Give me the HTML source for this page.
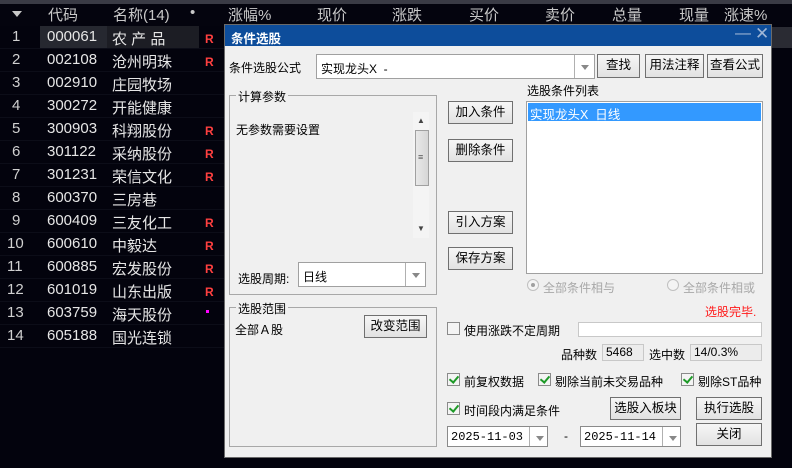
<!DOCTYPE html>
<html><head><meta charset="utf-8"><style>
*{margin:0;padding:0;box-sizing:border-box}
body{width:792px;height:468px;overflow:hidden;background:#03030d;font-family:"Liberation Sans","Noto Sans CJK SC",sans-serif;position:relative}
.a{position:absolute;white-space:nowrap}
.hd{color:#c8c8c8;font-size:15px;top:4px}
.row{position:absolute;left:0;width:224px;height:23px;color:#e6e6e6;font-size:15px}
.row span{position:absolute;top:2px}
.R{color:#ff4040;font-weight:bold;font-size:12px;top:6px!important}
.dlg{position:absolute;left:224px;top:24px;width:548px;height:434px;background:#f0f0f0;border:1px solid #6a6a6a;font-size:12px;color:#000}
.t{position:absolute;white-space:nowrap;font-size:12px}
.btn{position:absolute;border:1px solid #707070;background:linear-gradient(#f6f6f6,#e2e2e2);text-align:center;font-size:12.5px;line-height:21px}
.box{position:absolute;background:#fff;border:1px solid #a0a0a0}
.grp{position:absolute;border:1px solid #a8a8a8}
.lg{position:absolute;top:-8px;left:6px;background:#f0f0f0;padding:0 2px;font-size:12px}
.arr{position:absolute;right:0;top:0;bottom:0;width:20px;border-left:1px solid #b0b0b0}
.arr:after{content:"";position:absolute;left:6px;top:45%;border:4px solid transparent;border-top:5px solid #888}
.cb{position:absolute;width:13px;height:13px;border:1px solid #8a8a8a;background:#f4f4f4}
.cb.on:after{content:"";position:absolute;left:3px;top:0px;width:4px;height:7px;border:solid #1e9a28;border-width:0 2px 2px 0;transform:rotate(40deg)}
.rd{position:absolute;width:12px;height:12px;border-radius:50%;border:1px solid #c0c0c0;background:#f4f4f4}
.gray{color:#a8a8a8}
.ro{position:absolute;border:1px solid #c8c8c8;background:#ececec;font-size:12px;padding-left:3px;line-height:15px}
</style></head><body>
<div class="a" style="left:0;top:0;width:792px;height:4px;background:#3a3b45"></div>
<div class="a" style="left:0;top:4px;width:792px;height:22px;background:#04040e"></div>
<div class="a" style="left:12px;top:11px;border:5px solid transparent;border-top:6px solid #c8c8c8"></div>
<div class="a hd" style="left:48px">代码</div>
<div class="a hd" style="left:113px">名称(14)</div>
<div class="a hd" style="left:190px">•</div>
<div class="a hd" style="left:228px">涨幅%</div>
<div class="a hd" style="left:317px">现价</div>
<div class="a hd" style="left:392px">涨跌</div>
<div class="a hd" style="left:469px">买价</div>
<div class="a hd" style="left:545px">卖价</div>
<div class="a hd" style="left:612px">总量</div>
<div class="a hd" style="left:679px">现量</div>
<div class="a hd" style="left:724px">涨速%</div>
<div class="a" style="left:772px;top:27px;width:20px;height:21px;background:#2a2b33"></div>

<div class="a" style="left:40px;top:26px;width:67px;height:23px;background:#262830"></div>
<div class="a" style="left:107px;top:26px;width:92px;height:23px;background:#1c1d24"></div>
<div id="rows"></div>
<script>
var d=[["000061","农 产 品","R"],["002108","沧州明珠","R"],["002910","庄园牧场",""],["300272","开能健康",""],["300903","科翔股份","R"],["301122","采纳股份","R"],["301231","荣信文化","R"],["600370","三房巷",""],["600409","三友化工","R"],["600610","中毅达","R"],["600885","宏发股份","R"],["601019","山东出版","R"],["603759","海天股份","."],["605188","国光连锁",""]];
var h="";for(var i=0;i<14;i++){var y=26+23*i;var n=i+1;
h+='<div class="row" style="top:'+y+'px;border-bottom:1px solid #0c0d18"><span style="left:'+(n<10?12:7)+'px;color:#d0d0d0">'+n+'</span><span style="left:47px">'+d[i][0]+'</span><span style="left:112px">'+d[i][1]+'</span>'+(d[i][2]=="R"?'<span class="R" style="left:205px">R</span>':(d[i][2]=="."?'<span style="left:206px;top:8px;width:3px;height:3px;background:#f0f"></span>':''))+'</div>';}
document.getElementById("rows").innerHTML=h;
</script>

<div class="dlg">
<div class="a" style="left:0;top:0;width:546px;height:21px;background:#0d4d9b"></div>
<div class="t" style="left:6px;top:3px;color:#fff;font-weight:bold;font-size:12.5px">条件选股</div>
<div class="t" style="left:510px;top:0px;color:#9fb6d6;font-size:16px">—</div>
<div class="t" style="left:530px;top:-1px;color:#9fb6d6;font-size:17px">✕</div>

<div class="t" style="left:4px;top:34px">条件选股公式</div>
<div class="box" style="left:91px;top:29px;width:279px;height:25px"><span class="t" style="left:4px;top:5px">实现龙头X &nbsp;-</span><div class="arr"></div></div>
<div class="btn" style="left:372px;top:29px;width:43px;height:24px">查找</div>
<div class="btn" style="left:420px;top:29px;width:59px;height:24px">用法注释</div>
<div class="btn" style="left:482px;top:29px;width:56px;height:24px">查看公式</div>

<div class="grp" style="left:4px;top:70px;width:208px;height:200px"><div class="lg">计算参数</div>
<div class="t" style="left:6px;top:25px">无参数需要设置</div>
<div class="a" style="left:183px;top:16px;width:16px;height:126px;background:#f4f4f4"></div>
<div class="a" style="left:185px;top:34px;width:14px;height:56px;border:1px solid #a0a0a0;background:linear-gradient(90deg,#e8e8e8,#d6d6d6)"></div>
<div class="t" style="left:188px;top:56px;font-size:9px;color:#555">≡</div>
<div class="t" style="left:187px;top:20px;font-size:8px;color:#444">▲</div>
<div class="t" style="left:187px;top:128px;font-size:8px;color:#444">▼</div>
<div class="t" style="left:8px;top:174px">选股周期:</div>
<div class="box" style="left:68px;top:166px;width:128px;height:25px"><span class="t" style="left:4px;top:5px">日线</span><div class="arr"></div></div>
</div>

<div class="btn" style="left:223px;top:76px;width:65px;height:23px">加入条件</div>
<div class="btn" style="left:223px;top:114px;width:65px;height:23px">删除条件</div>
<div class="btn" style="left:223px;top:186px;width:65px;height:23px">引入方案</div>
<div class="btn" style="left:223px;top:222px;width:65px;height:23px">保存方案</div>

<div class="t" style="left:302px;top:57px">选股条件列表</div>
<div class="box" style="left:301px;top:76px;width:237px;height:173px"><div class="a" style="left:1px;top:1px;width:233px;height:18px;background:#3399ff;color:#fff;font-size:12.5px;padding:1px 2px">实现龙头X &nbsp;日线</div></div>

<div class="rd" style="left:302px;top:254px"></div><div class="a" style="left:306px;top:258px;width:4px;height:4px;border-radius:50%;background:#a0a0a0"></div>
<div class="t gray" style="left:318px;top:254px">全部条件相与</div>
<div class="rd" style="left:442px;top:254px"></div>
<div class="t gray" style="left:458px;top:254px">全部条件相或</div>
<div class="t" style="left:480px;top:278px;color:#ff1a1a">选股完毕.</div>

<div class="grp" style="left:4px;top:282px;width:208px;height:140px"><div class="lg">选股范围</div>
<div class="t" style="left:5px;top:13px">全部Ａ股</div>
<div class="btn" style="left:134px;top:7px;width:63px;height:23px">改变范围</div>
</div>

<div class="cb" style="left:222px;top:297px"></div>
<div class="t" style="left:239px;top:297px">使用涨跌不定周期</div>
<div class="box" style="left:353px;top:297px;width:184px;height:15px;border-color:#c8c8c8"></div>
<div class="t" style="left:336px;top:321px">品种数</div>
<div class="ro" style="left:377px;top:319px;width:42px;height:17px">5468</div>
<div class="t" style="left:424px;top:321px">选中数</div>
<div class="ro" style="left:465px;top:319px;width:72px;height:17px">14/0.3%</div>

<div class="cb on" style="left:222px;top:348px"></div><div class="t" style="left:239px;top:348px">前复权数据</div>
<div class="cb on" style="left:313px;top:348px"></div><div class="t" style="left:330px;top:348px">剔除当前未交易品种</div>
<div class="cb on" style="left:456px;top:348px"></div><div class="t" style="left:473px;top:348px">剔除ST品种</div>
<div class="cb on" style="left:222px;top:377px"></div><div class="t" style="left:239px;top:377px">时间段内满足条件</div>
<div class="btn" style="left:385px;top:372px;width:71px;height:23px">选股入板块</div>
<div class="btn" style="left:471px;top:372px;width:66px;height:23px">执行选股</div>
<div class="btn" style="left:471px;top:398px;width:66px;height:23px">关闭</div>
<div class="box" style="left:222px;top:401px;width:101px;height:21px;border-color:#8a8a8a"><span class="t" style="left:3px;top:3px;font-family:'Liberation Mono',monospace">2025-11-03</span><div class="arr" style="width:18px"></div></div>
<div class="t" style="left:339px;top:404px">-</div>
<div class="box" style="left:355px;top:401px;width:101px;height:21px;border-color:#8a8a8a"><span class="t" style="left:3px;top:3px;font-family:'Liberation Mono',monospace">2025-11-14</span><div class="arr" style="width:18px"></div></div>
</div>
</body></html>
